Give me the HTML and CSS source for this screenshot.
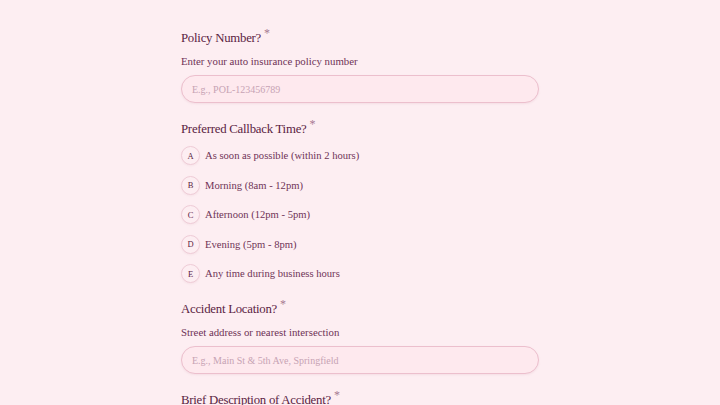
FILE: index.html
```html
<!DOCTYPE html>
<html lang="en">
<head>
    <meta charset="UTF-8">
    <meta name="viewport" content="width=device-width, initial-scale=1.0">
    <title>Accident Callback Form</title>
    <link rel="stylesheet" href="styles.css">
</head>
<body>
    <form class="form">
        <div class="question">
            <label class="q-title" for="policy">Policy Number?<span class="req">*</span></label>
            <p class="q-desc">Enter your auto insurance policy number</p>
            <input class="q-input" id="policy" type="text" placeholder="E.g., POL-123456789">
        </div>

        <div class="question">
            <div class="q-title">Preferred Callback Time?<span class="req">*</span></div>
            <div class="options">
                <label class="option"><span class="key">A</span>As soon as possible (within 2 hours)</label>
                <label class="option"><span class="key">B</span>Morning (8am - 12pm)</label>
                <label class="option"><span class="key">C</span>Afternoon (12pm - 5pm)</label>
                <label class="option"><span class="key">D</span>Evening (5pm - 8pm)</label>
                <label class="option"><span class="key">E</span>Any time during business hours</label>
            </div>
        </div>

        <div class="question">
            <label class="q-title" for="location">Accident Location?<span class="req">*</span></label>
            <p class="q-desc">Street address or nearest intersection</p>
            <input class="q-input" id="location" type="text" placeholder="E.g., Main St &amp; 5th Ave, Springfield">
        </div>

        <div class="question">
            <label class="q-title" for="desc">Brief Description of Accident?<span class="req">*</span></label>
        </div>
    </form>
</body>
</html>
```

FILE: styles.css
```css
:root {
    --bg: #fdeef2;
    --field: #fee9ee;
    --border: #ecbfcd;
    --title: #5b2342;
    --text: #6f3356;
    --muted: #c7a3b4;
}

* {
    margin: 0;
    padding: 0;
    box-sizing: border-box;
}

body {
    font-family: "Liberation Serif", "Times New Roman", serif;
    background-color: var(--bg);
    color: var(--text);
    overflow: hidden;
}

.form {
    width: 358px;
    margin: 0 auto;
    padding-top: 28px;
    display: flex;
    flex-direction: column;
    gap: 16px;
}

.question {
    display: flex;
    flex-direction: column;
}

.q-title {
    display: block;
    font-size: 12.8px;
    line-height: 20px;
    letter-spacing: -0.25px;
    color: var(--title);
}

.req {
    font-size: 12px;
    color: #a77891;
    margin-left: 3px;
    position: relative;
    top: -5px;
}

.q-desc {
    margin-top: 5px;
    font-size: 10.8px;
    line-height: 16px;
    color: var(--text);
}

.q-input {
    margin-top: 6px;
    width: 100%;
    height: 28px;
    padding: 0 10px;
    border: 1.5px solid var(--border);
    border-radius: 14px;
    background-color: var(--field);
    font-family: inherit;
    font-size: 10px;
    color: var(--text);
    outline: none;
    box-shadow: 0 1px 2px rgba(200, 140, 160, 0.15);
}

.q-input::placeholder {
    color: var(--muted);
}

/* Options */
.options {
    margin-top: 7px;
    display: flex;
    flex-direction: column;
    gap: 10.5px;
}

.option {
    display: flex;
    align-items: center;
    gap: 5px;
    height: 19px;
    font-size: 10.6px;
    color: var(--text);
    cursor: pointer;
}

.key {
    width: 19px;
    height: 19px;
    border: 1.5px solid #efccd7;
    border-radius: 50%;
    background-color: var(--bg);
    display: flex;
    align-items: center;
    justify-content: center;
    font-size: 8.5px;
    color: var(--title);
    flex-shrink: 0;
    box-shadow: 0 1px 2px rgba(200, 140, 160, 0.12);
}
```
